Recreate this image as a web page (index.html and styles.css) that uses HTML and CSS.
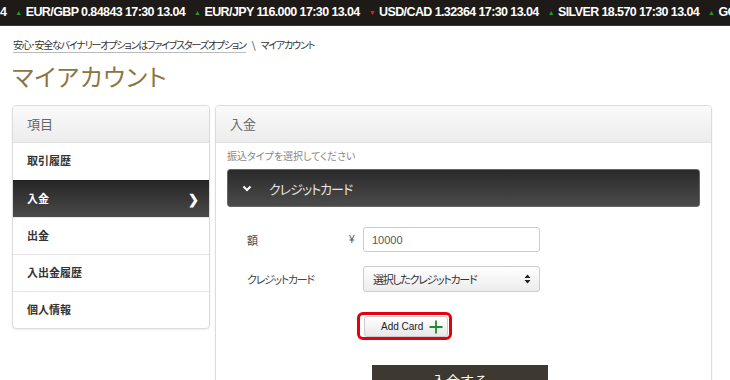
FILE: index.html
```html
<!DOCTYPE html>
<html lang="ja">
<head>
    <meta charset="UTF-8">
    <title>マイアカウント</title>
    <link rel="stylesheet" href="styles.css">
</head>
<body>
    <div class="ticker">
        <div class="ticker-track">
            <span class="tick">4</span>
            <span class="tick"><i class="up">&#9650;</i>EUR/GBP 0.84843 17:30 13.04</span>
            <span class="tick"><i class="up">&#9650;</i>EUR/JPY 116.000 17:30 13.04</span>
            <span class="tick"><i class="down">&#9660;</i>USD/CAD 1.32364 17:30 13.04</span>
            <span class="tick"><i class="up">&#9650;</i>SILVER 18.570 17:30 13.04</span>
            <span class="tick"><i class="up">&#9650;</i>GOLD 1287.50 17:30 13.04</span>
        </div>
    </div>

    <div class="breadcrumb">
        <a href="#">安心･安全なバイナリーオプションはファイブスターズオプション</a>
        <span class="sep">\</span>
        <span>マイアカウント</span>
    </div>

    <h1 class="page-title">マイアカウント</h1>

    <div class="layout">
        <div class="panel side">
            <div class="panel-head">項目</div>
            <ul class="side-menu">
                <li>取引履歴</li>
                <li class="active">入金 <span class="chev">&#10095;</span></li>
                <li>出金</li>
                <li>入出金履歴</li>
                <li>個人情報</li>
            </ul>
        </div>

        <div class="panel main">
            <div class="panel-head">入金</div>
            <div class="panel-body">
                <p class="hint">振込タイプを選択してください</p>
                <div class="type-bar">
                    <svg class="caret" width="10" height="7" viewBox="0 0 10 7">
                        <path d="M1.5 1.5 L5 5 L8.5 1.5" fill="none" stroke="#fff" stroke-width="2"/>
                    </svg>
                    <span>クレジットカード</span>
                </div>

                <form class="deposit-form">
                    <div class="row">
                        <label>額</label>
                        <span class="yen">¥</span>
                        <input type="text" value="10000">
                    </div>
                    <div class="row">
                        <label>クレジットカード</label>
                        <span class="yen"></span>
                        <div class="select">
                            <span>選択したクレジットカード</span>
                            <svg width="7" height="10" viewBox="0 0 7 10">
                                <path d="M3.5 0.5 L6.5 4 L0.5 4 Z M3.5 9.5 L6.5 6 L0.5 6 Z" fill="#222"/>
                            </svg>
                        </div>
                    </div>
                    <div class="add-wrap">
                        <button type="button" class="btn-add">
                            <span>Add Card</span>
                            <svg width="14" height="14" viewBox="0 0 14 14">
                                <path d="M7 0.5 V13.5 M0.5 7 H13.5" stroke="#1f8a2e" stroke-width="1.8"/>
                            </svg>
                        </button>
                    </div>
                    <button type="submit" class="btn-submit">入金する</button>
                </form>
            </div>
        </div>
    </div>
</body>
</html>
```

FILE: styles.css
```css
/* My account page */
body {
    margin: 0;
    background-color: #ffffff;
    font-family: "Liberation Sans", "Noto Sans CJK JP", sans-serif;
    font-feature-settings: "palt";
    color: #333;
    overflow: hidden;
}

.ticker {
    height: 25px;
    background-color: #1d1a17;
    border-bottom: 1px solid #3a3631;
    overflow: hidden;
    white-space: nowrap;
}

.ticker-track {
    display: flex;
    color: #ffffff;
    font-weight: bold;
    font-size: 12.5px;
    letter-spacing: -0.6px;
    line-height: 25px;
}

.tick {
    margin-right: 9px;
}

.tick i {
    font-style: normal;
    font-size: 7px;
    margin-right: 4px;
    position: relative;
    top: -1px;
}

.up {
    color: #1d9a2c;
}

.down {
    color: #e02020;
}

.breadcrumb {
    padding: 11px 0 0 13px;
    font-size: 10px;
    font-family: "Noto Sans CJK JP", sans-serif;
    letter-spacing: -1.2px;
    color: #333;
}

.breadcrumb a {
    color: #333;
    text-decoration: none;
    border-bottom: 1px solid #bbb;
}

.breadcrumb .sep {
    margin: 0 5px;
}

.page-title {
    margin: 8px 0 0 12px;
    font-family: "Noto Sans CJK JP", sans-serif;
    font-size: 24px;
    font-weight: normal;
    color: #8c7542;
    letter-spacing: 1px;
    height: 45px;
    line-height: 32px;
}

.layout {
    display: flex;
    align-items: flex-start;
    gap: 5px;
    padding-left: 12px;
}

.panel {
    border: 1px solid #dcdcdc;
    border-radius: 4px;
    background: #fff;
    overflow: hidden;
    box-shadow: 0 1px 2px rgba(0, 0, 0, 0.08);
}

.side {
    width: 196px;
}

.main {
    width: 495px;
    height: 300px;
}

.panel-head {
    height: 36px;
    line-height: 35px;
    padding-left: 14px;
    font-family: "Noto Sans CJK JP", sans-serif;
    font-size: 13px;
    color: #666;
    background: linear-gradient(#fafafa, #ececec);
    border-bottom: 1px solid #e2e2e2;
}

.side-menu {
    list-style: none;
    margin: 0;
    padding: 0;
}

.side-menu li {
    position: relative;
    height: 36px;
    line-height: 35px;
    padding-left: 14px;
    font-family: "Noto Sans CJK JP", sans-serif;
    font-size: 11px;
    font-weight: bold;
    color: #333;
    border-top: 1px solid #e6e6e6;
}

.side-menu li:first-child {
    height: 37px;
    border-top: none;
}

.side-menu li.active {
    color: #fff;
    background: linear-gradient(#262626, #4a4a4a);
    border-top-color: #222;
}

.chev {
    position: absolute;
    right: 10px;
    font-size: 13px;
}

.panel-body {
    padding: 0 11px;
}

.hint {
    margin: 5px 0 6px;
    font-family: "Noto Sans CJK JP", sans-serif;
    font-size: 10px;
    color: #888;
}

.type-bar {
    display: flex;
    align-items: center;
    height: 36px;
    border-radius: 3px;
    background: linear-gradient(#2a2a2a, #4b4b4b);
    border: 1px solid #666;
    font-family: "Noto Sans CJK JP", sans-serif;
    font-size: 13px;
    letter-spacing: -1px;
    color: #e6e6e6;
}

.caret {
    margin: 0 17px 0 14px;
}

.deposit-form {
    padding: 20px 0 0 20px;
}

.row {
    display: flex;
    align-items: center;
    height: 25px;
    margin-bottom: 14px;
}

.row label {
    width: 102px;
    font-family: "Noto Sans CJK JP", sans-serif;
    font-size: 11px;
    letter-spacing: -1.3px;
    color: #444;
}

.yen {
    width: 14px;
    font-size: 10px;
    color: #555;
}

.row input[type="text"] {
    box-sizing: border-box;
    width: 177px;
    height: 25px;
    padding: 0 8px;
    border: 1px solid #ccc;
    border-radius: 3px;
    font-family: "Liberation Sans", sans-serif;
    font-size: 11px;
    color: #555;
}

.select {
    box-sizing: border-box;
    display: flex;
    align-items: center;
    justify-content: space-between;
    width: 177px;
    height: 26px;
    padding: 0 8px 0 9px;
    border: 1px solid #ccc;
    border-radius: 3px;
    background: linear-gradient(#ffffff, #ececec);
    font-family: "Noto Sans CJK JP", sans-serif;
    font-size: 11px;
    letter-spacing: -1.3px;
    color: #333;
}

.add-wrap {
    display: inline-block;
    margin: 7px 0 0 110px;
    padding: 1px 1px 0 4px;
    border: 3px solid #e4000f;
    border-radius: 6px;
}

.btn-add {
    display: flex;
    align-items: center;
    justify-content: space-between;
    width: 84px;
    height: 21px;
    padding: 0 4px 0 16px;
    border: 1px solid #ccc;
    border-radius: 3px;
    background: linear-gradient(#ffffff, #e8e8e8);
    font-family: "Liberation Sans", sans-serif;
    font-size: 10px;
    color: #222;
}

.btn-submit {
    display: block;
    width: 176px;
    height: 30px;
    margin: 25px 0 0 125px;
    border: none;
    background-color: #3d3930;
    color: #fff;
    font-family: "Noto Sans CJK JP", sans-serif;
    font-size: 14px;
}
```
